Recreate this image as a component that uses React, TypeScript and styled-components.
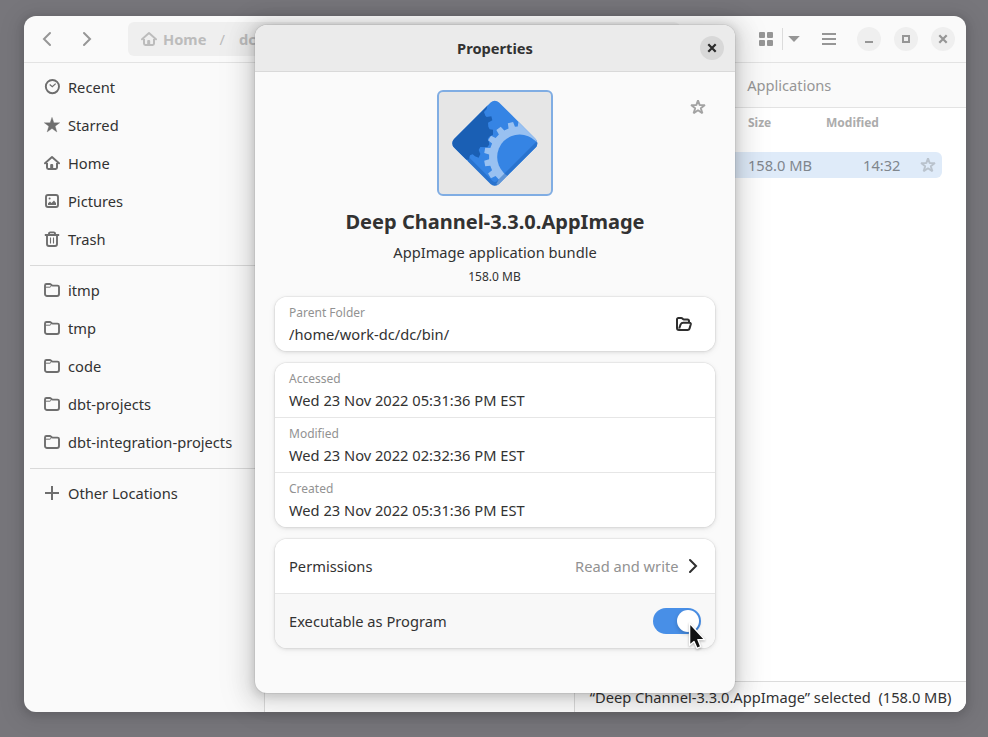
import React from "react";
import styled, { createGlobalStyle } from "styled-components";

const Global = createGlobalStyle`
  * { box-sizing: border-box; }
  html, body { margin: 0; background: #77767b; }
  body { overflow: hidden; font-family: "Noto Sans", sans-serif; font-size: 14.667px; line-height: 20px; color: #323232; }
  button { border: 0; padding: 0; background: none; color: inherit; font: inherit; }
  svg { display: block; flex: none; }
`;

/* ---------- file manager window ---------- */

const Desktop = styled.div`
  position: relative;
  width: 988px;
  height: 737px;
  padding: 16px 22px 25px 24px;
  background: #77767b;
`;

const FilesWindow = styled.div`
  display: flex;
  flex-direction: column;
  width: 942px;
  height: 696px;
  border-radius: 12px;
  overflow: hidden;
  background: #fafafa;
`;

const WindowShadow = styled.div`
  border-radius: 12px;
  box-shadow: 0 2px 8px 2px rgba(0, 0, 0, 0.13), 0 3px 20px 10px rgba(0, 0, 0, 0.05);
`;

const HeaderBar = styled.header`
  display: flex;
  align-items: center;
  flex: none;
  height: 47px;
  padding: 0 11px 0 6px;
  border-bottom: 1px solid #e3e3e3;
  color: #969696;
`;

const ToolButton = styled.button<{ $width?: number; $gap?: number }>`
  display: flex;
  align-items: center;
  justify-content: center;
  width: ${(p) => p.$width ?? 34}px;
  height: 34px;
  margin-left: ${(p) => p.$gap ?? 0}px;
`;

const PathBar = styled.div`
  display: flex;
  align-items: center;
  width: 552px;
  height: 34px;
  margin-left: 24px;
  padding-left: 13px;
  border-radius: 6px;
  background: #efefef;
  color: #bcbcbc;
  font-weight: 700;
`;

const PathLabel = styled.span`
  margin-left: 6px;
`;

const PathSlash = styled.span`
  margin: 0 14px 0 13px;
  font-weight: 400;
`;

const Divider = styled.div`
  width: 1px;
  height: 22px;
  background: #dcdcdc;
`;

const WindowButtons = styled.div`
  display: flex;
  gap: 13px;
  margin-left: auto;
`;

const RoundButton = styled.button<{ $dark?: boolean }>`
  display: flex;
  align-items: center;
  justify-content: center;
  width: 24px;
  height: 24px;
  border-radius: 50%;
  background: ${(p) => (p.$dark ? "#d8d8d8" : "#efefef")};
  color: ${(p) => (p.$dark ? "#2b2b2b" : "#969696")};
`;

const WindowBody = styled.div`
  display: flex;
  flex: 1;
  min-height: 0;
`;

const Sidebar = styled.nav`
  width: 241px;
  padding: 5px 0 0 6px;
  border-right: 1px solid #dcdcdc;
`;

const Place = styled.div`
  display: flex;
  align-items: center;
  gap: 8px;
  height: 38px;
  padding-left: 14px;
  white-space: nowrap;

  svg { color: #6e6e6e; }
`;

const PlacesRule = styled.div`
  height: 1px;
  margin: 7px 0 5px;
  background: #d9d9d9;
`;

const Main = styled.main`
  display: flex;
  flex-direction: column;
  flex: 1;
  background: #fff;
`;

const TabBar = styled.div`
  display: grid;
  grid-template-columns: 1fr 1fr;
  height: 45px;
  border-bottom: 1px solid #e3e3e3;
  background: #fafafa;
  color: #969696;
`;

const Tab = styled.div`
  grid-column: 2;
  display: flex;
  align-items: center;
  justify-content: center;
  padding-right: 3px;
`;

const Columns = styled.div`
  display: flex;
  height: 44px;
  padding: 6px 24px 0 483px;
  font-size: 12px;
  line-height: 18px;
  font-weight: 700;
  color: #acacac;
`;

const Column = styled.div`
  width: 78px;
`;

const FileRow = styled.div`
  display: flex;
  align-items: center;
  justify-content: flex-end;
  height: 26px;
  margin: 0 24px;
  padding-right: 6px;
  border-radius: 6px;
  background: #dfebf9;
  color: #80868d;

  svg { margin-left: 19.5px; color: #bac3cd; }
`;

const FileTime = styled.span`
  width: 88.5px;
  text-align: right;
`;

const StatusBar = styled.div`
  display: flex;
  align-items: center;
  align-self: flex-end;
  justify-content: flex-end;
  width: 392px;
  height: 31px;
  margin-top: auto;
  padding-right: 14.7px;
  border-top: 1px solid #dcdcdc;
  border-left: 1px solid #dcdcdc;
  background: #fdfdfd;
  white-space: pre;
`;

/* ---------- properties dialog ---------- */

const Dialog = styled.section`
  position: absolute;
  left: 255px;
  top: 25px;
  width: 480px;
  height: 668px;
  border-radius: 12px;
  background: #fafafa;
  box-shadow: 0 2px 8px 2px rgba(0, 0, 0, 0.13), 0 3px 20px 10px rgba(0, 0, 0, 0.09),
    0 6px 32px 16px rgba(0, 0, 0, 0.04), 0 0 0 1px rgba(0, 0, 0, 0.05);
`;

const DialogHeader = styled.header`
  display: grid;
  grid-template-columns: 1fr auto 1fr;
  align-items: center;
  height: 47px;
  padding: 0 11px;
  border-bottom: 1px solid #d9d9d9;
  border-radius: 12px 12px 0 0;
  background: #ebebeb;
  font-weight: 700;

  h1 { grid-column: 2; margin: 0; font-size: inherit; }
  button { justify-self: end; }
`;

const DialogBody = styled.div`
  padding: 18px 20px 0;
`;

const Hero = styled.div`
  display: grid;
  grid-template-columns: 1fr auto 1fr;

  > svg { justify-self: end; margin: 9px 9px 0 0; color: #a3a3a3; }
`;

const IconFrame = styled.div`
  grid-column: 2;
  display: flex;
  align-items: center;
  justify-content: center;
  width: 116px;
  height: 106px;
  border: 2px solid #80ade3;
  border-radius: 6px;
  background: #e6e6e6;
`;

const FileName = styled.h2`
  margin: 12px 0 0;
  font-size: 20.05px;
  line-height: 28px;
  text-align: center;
`;

const FileKind = styled.div`
  margin-top: 6px;
  text-align: center;
`;

const FileSize = styled.div`
  margin: 7px 1px 12px 0;
  font-size: 12px;
  line-height: 16px;
  text-align: center;
`;

const Card = styled.div`
  margin-bottom: 12px;
  border-radius: 12px;
  overflow: hidden;
  background: #fff;
  box-shadow: 0 0 0 1px rgba(0, 0, 0, 0.04), 0 1px 3px 1px rgba(0, 0, 0, 0.07), 0 2px 6px 2px rgba(0, 0, 0, 0.03);
`;

const CardRow = styled.div<{ $hover?: boolean }>`
  display: flex;
  align-items: center;
  justify-content: space-between;
  height: 54px;
  padding: 0 14px;
  background: ${(p) => (p.$hover ? "#f8f8f8" : "#fff")};

  & + & {
    height: 55px;
    border-top: 1px solid #e6e6e6;
  }
`;

const Caption = styled.div`
  margin-bottom: 3px;
  padding-top: 1px;
  font-size: 12px;
  line-height: 16px;
  color: #929292;
`;

const RowValue = styled.div`
  display: flex;
  align-items: center;
  gap: 6.5px;
  color: #929292;

  svg { color: #2e2e2e; }
`;

const FolderButton = styled.button`
  margin-right: 9px;
  color: #2e2e2e;
`;

const Switch = styled.div`
  display: flex;
  justify-content: flex-end;
  width: 48px;
  height: 26px;
  padding: 2px;
  border-radius: 13px;
  background: #488fe7;
`;

const Knob = styled.div`
  width: 22px;
  height: 22px;
  border-radius: 50%;
  background: #fff;
  box-shadow: 0 2px 4px rgba(0, 0, 0, 0.2);
`;

const Pointer = styled.svg`
  position: absolute;
  left: 685px;
  top: 620px;
  filter: drop-shadow(0 1px 1px rgba(0, 0, 0, 0.3));
`;

/* ---------- icons ---------- */

type IconProps = { children: React.ReactNode };
const Icon = ({ children }: IconProps) => (
  <svg width="16" height="16" viewBox="0 0 16 16" fill="none" stroke="currentColor" strokeWidth="2">
    {children}
  </svg>
);

const BackIcon = () => <Icon><path d="M11 2 5 8l6 6" strokeLinecap="round" /></Icon>;
const ForwardIcon = () => <Icon><path d="m5 2 6 6-6 6" strokeLinecap="round" /></Icon>;
const ClockIcon = () => (
  <Icon>
    <circle cx="8.4" cy="7.6" r="6.6" strokeWidth="1.9" />
    <path d="m5.7 5.5 2.6 2.3 3.4-3.2" strokeWidth="1.2" />
  </Icon>
);
const starPath = "M8 0.3 9.9 5.7H15.8L11.2 9.2 12.9 15 8 11.6 3.1 15 4.8 9.2 0.2 5.7H6.1Z";
const StarIcon = () => <Icon><path d={starPath} fill="currentColor" strokeWidth="0.3" strokeLinejoin="round" /></Icon>;
const StarOutline = () => (
  <Icon>
    <path
      d="M8 1.300 9.700 6.100H14.900L10.800 9.200 12.400 14.300 8 11.200 3.600 14.300 5.200 9.200 1.100 6.100H6.300Z"
      strokeWidth="1.900"
      strokeLinejoin="bevel"
    />
  </Icon>
);
const HomeIcon = () => (
  <Icon>
    <path d="M1 8.3 8 2l7 6.3" strokeLinecap="round" strokeLinejoin="round" strokeWidth="1.9" />
    <path d="M3 8v4.6a1.4 1.4 0 0 0 1.4 1.4h7.2a1.4 1.4 0 0 0 1.4-1.4V8" />
    <path d="M6.200 14.200V10a1 1 0 0 1 1-1h1a1 1 0 0 1 1 1v4.200Z" fill="currentColor" stroke="none" />
  </Icon>
);
const PictureIcon = () => (
  <Icon>
    <rect x="2" y="2" width="12" height="12" rx="2" strokeWidth="1.9" />
    <path d="M4 12V10.200L6 8.500 7.500 10 10 7.500 12 10v2Z" fill="currentColor" stroke="none" />
    <circle cx="5.600" cy="5.600" r="1" fill="currentColor" stroke="none" />
  </Icon>
);
const TrashIcon = () => (
  <Icon>
    <path d="M0.8 4h14.4M5 4V2.6A1.2 1.2 0 0 1 6.2 1.4h3.6A1.2 1.2 0 0 1 11 2.6V4M3 4v9a2 2 0 0 0 2 2h6a2 2 0 0 0 2-2V4" strokeWidth="1.9" />
    <path d="M6.5 6.5v6M9.5 6.5v6" strokeWidth="1.1" />
  </Icon>
);
const FolderIcon = () => (
  <Icon>
    <path d="M1 12V3.5A1.5 1.5 0 0 1 2.5 2h3.2c.5 0 .8.1 1.2.5l.8.7c.3.3.6.4 1 .4h4.8A1.5 1.5 0 0 1 15 5.1V12a2 2 0 0 1-2 2H3a2 2 0 0 1-2-2Z" strokeWidth="1.9" />
    <path d="M1.5 5.2H6L7.6 3.8" strokeWidth="1" />
  </Icon>
);
const PlusIcon = () => <Icon><path d="M8 1v14M1 8h14" /></Icon>;
const OpenFolderIcon = () => (
  <Icon>
    <path d="M3 14a2 2 0 0 1-2-2V3.3A1.3 1.3 0 0 1 2.3 2h2.9c.5 0 .9.2 1.2.5l.5.5c.3.3.6.5 1 .5h3.6A1.5 1.5 0 0 1 13 5v1.2M3 14h8.6a2 2 0 0 0 1.900-1.400l1.300-4.300A1.200 1.200 0 0 0 13.700 6.800H7.200a3 3 0 0 0-2.600 1.600L3.200 12.500" strokeLinejoin="round" />
  </Icon>
);
const GridIcon = () => (
  <Icon>
    <g fill="currentColor" stroke="none">
      <rect x="1" y="1" width="6" height="6" rx="1" />
      <rect x="9" y="1" width="6" height="6" rx="1" />
      <rect x="1" y="9" width="6" height="6" rx="1" />
      <rect x="9" y="9" width="6" height="6" rx="1" />
    </g>
  </Icon>
);
const DownIcon = () => <Icon><path d="M2.200 5h11.600L8 11Z" fill="currentColor" stroke="none" /></Icon>;
const MenuIcon = () => <Icon><path d="M1 3h14M1 8h14M1 13h14" /></Icon>;
const MinimizeIcon = () => <Icon><path d="M4 11h8" /></Icon>;
const MaximizeIcon = () => <Icon><rect x="5" y="5" width="6" height="6" /></Icon>;
const CloseIcon = () => <Icon><path d="m4.300 4.300 7.400 7.400m0-7.400-7.400 7.400" strokeWidth="2.200" /></Icon>;

/** Outline of a toothed wheel around (cx, cy), with tooth centres every `step` degrees. */
function gearPath(cx: number, cy: number, outer: number, root: number, first: number, step: number) {
  const points: string[] = [];
  const add = (radius: number, degrees: number) => {
    const a = (degrees * Math.PI) / 180;
    points.push(`${(cx + radius * Math.cos(a)).toFixed(1)} ${(cy - radius * Math.sin(a)).toFixed(1)}`);
  };
  for (let i = 0; i * step < 359; i++) {
    const mid = first + i * step;
    add(root, mid - 6.2);
    add(outer, mid - 4.4);
    add(outer, mid + 4.4);
    add(root, mid + 6.2);
  }
  return `M${points.join("L")}Z`;
}

const AppLogo = () => (
  <svg width="85.67" height="85.67" viewBox="80 61 257 257">
    <defs>
      <clipPath id="diamond">
        <rect x="113" y="95" width="191" height="191" rx="18" transform="rotate(45 208.5 190.500)" />
      </clipPath>
    </defs>
    <g clipPath="url(#diamond)">
      <rect x="80" y="61" width="257" height="258" fill="#3584e4" />
      <path
        d="M60 60H190L184 88 176 97 180 108 184 112 198 110 201 122 188 129 189 141 193 149 203 150 203 165 192 171 187 178 190 184 192 194 186 203 165 202 160 211 165 223 160 234 149 230 142 224 134 227 130 240 60 240Z"
        fill="#1a5fb4"
      />
      <path d={gearPath(283, 232, 107, 92, 105, 21.4)} fill="#99c1f1" />
      <circle cx="283" cy="232" r="67.500" fill="#3584e4" />
      <path d="M128 230 202 304Q208.500 310 215 304L345 174V330H128Z" fill="#1a5fb4" fillOpacity="0.450" />
    </g>
  </svg>
);

const places = [
  { label: "Recent", icon: <ClockIcon /> },
  { label: "Starred", icon: <StarIcon /> },
  { label: "Home", icon: <HomeIcon /> },
  { label: "Pictures", icon: <PictureIcon /> },
  { label: "Trash", icon: <TrashIcon /> },
];
const bookmarks = ["itmp", "tmp", "code", "dbt-projects", "dbt-integration-projects"];
const dates = [
  { label: "Accessed", value: "Wed 23 Nov 2022 05:31:36 PM EST" },
  { label: "Modified", value: "Wed 23 Nov 2022 02:32:36 PM EST" },
  { label: "Created", value: "Wed 23 Nov 2022 05:31:36 PM EST" },
];

export default function App() {
  return (
    <Desktop>
      <Global />
      <WindowShadow>
        <FilesWindow>
          <HeaderBar>
            <ToolButton aria-label="Back"><BackIcon /></ToolButton>
            <ToolButton aria-label="Forward" $gap={6}><ForwardIcon /></ToolButton>
            <PathBar>
              <HomeIcon />
              <PathLabel>Home</PathLabel>
              <PathSlash>/</PathSlash>
              <span>dc</span>
            </PathBar>
            <ToolButton aria-label="View" $gap={69} $width={33}><GridIcon /></ToolButton>
            <Divider />
            <ToolButton aria-label="View options" $width={22}><DownIcon /></ToolButton>
            <ToolButton aria-label="Menu" $gap={7}><MenuIcon /></ToolButton>
            <WindowButtons>
              <RoundButton aria-label="Minimize"><MinimizeIcon /></RoundButton>
              <RoundButton aria-label="Maximize"><MaximizeIcon /></RoundButton>
              <RoundButton aria-label="Close"><CloseIcon /></RoundButton>
            </WindowButtons>
          </HeaderBar>
          <WindowBody>
            <Sidebar>
              {places.map((p) => (
                <Place key={p.label}>{p.icon}{p.label}</Place>
              ))}
              <PlacesRule />
              {bookmarks.map((b) => (
                <Place key={b}><FolderIcon />{b}</Place>
              ))}
              <PlacesRule />
              <Place><PlusIcon />Other Locations</Place>
            </Sidebar>
            <Main>
              <TabBar><Tab>Applications</Tab></TabBar>
              <Columns>
                <Column>Size</Column>
                <Column>Modified</Column>
              </Columns>
              <FileRow>
                <span>158.0 MB</span>
                <FileTime>14:32</FileTime>
                <StarOutline />
              </FileRow>
              <StatusBar>{"“Deep Channel-3.3.0.AppImage” selected  (158.0 MB)"}</StatusBar>
            </Main>
          </WindowBody>
        </FilesWindow>
      </WindowShadow>

      <Dialog>
        <DialogHeader>
          <h1>Properties</h1>
          <RoundButton $dark aria-label="Close"><CloseIcon /></RoundButton>
        </DialogHeader>
        <DialogBody>
          <Hero>
            <IconFrame><AppLogo /></IconFrame>
            <StarOutline />
          </Hero>
          <FileName>Deep Channel-3.3.0.AppImage</FileName>
          <FileKind>AppImage application bundle</FileKind>
          <FileSize>158.0 MB</FileSize>
          <Card>
            <CardRow>
              <div>
                <Caption>Parent Folder</Caption>
                <div>/home/work-dc/dc/bin/</div>
              </div>
              <FolderButton aria-label="Open parent folder"><OpenFolderIcon /></FolderButton>
            </CardRow>
          </Card>
          <Card>
            {dates.map((d) => (
              <CardRow key={d.label}>
                <div>
                  <Caption>{d.label}</Caption>
                  <div>{d.value}</div>
                </div>
              </CardRow>
            ))}
          </Card>
          <Card>
            <CardRow>
              <span>Permissions</span>
              <RowValue>Read and write<ForwardIcon /></RowValue>
            </CardRow>
            <CardRow $hover>
              <span>Executable as Program</span>
              <Switch><Knob /></Switch>
            </CardRow>
          </Card>
        </DialogBody>
      </Dialog>

      <Pointer width="24" height="34" viewBox="0 0 24 34">
        <path d="M4.600 3.200V25.200L9 21.500 12 28.300 15.800 26.700 12.900 19.600H19.600Z" fill="#111" stroke="#fff" strokeWidth="1.400" strokeLinejoin="round" />
      </Pointer>
    </Desktop>
  );
}
